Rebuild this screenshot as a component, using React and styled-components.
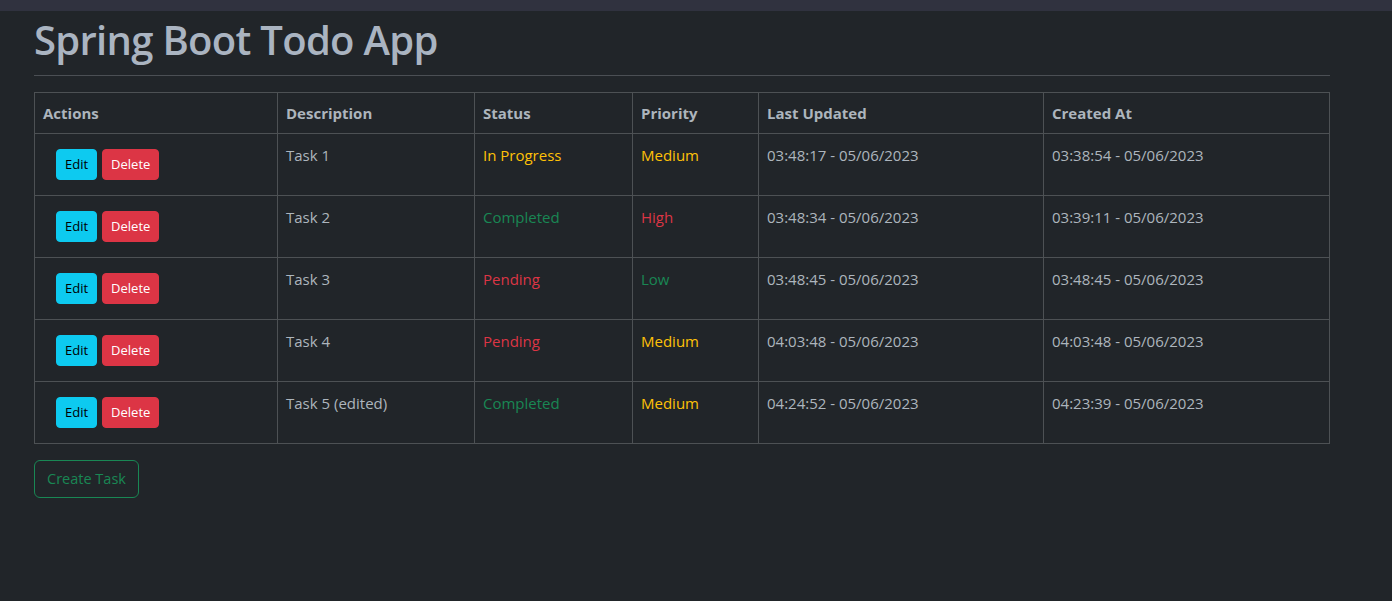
import styled, { createGlobalStyle } from 'styled-components'

const GlobalStyle = createGlobalStyle`
  * { box-sizing: border-box; }
  html, body {
    margin: 0;
    background: #212529;
    color: #adb5bd;
    font-family: "Open Sans", "Noto Sans", sans-serif;
    font-size: 16px;
    line-height: 1.5;
  }
`

const TopBar = styled.div`
  height: 11px;
  background: #30323f;
`

const Page = styled.main`
  width: 1296px;
  margin-left: 34px;
`

const Title = styled.h1`
  font-size: 40px;
  font-weight: 600;
  line-height: 1.2;
  margin: 5px 0 0;
  color: #aab4c1;
  letter-spacing: -0.7px;
`

const Rule = styled.hr`
  border: 0;
  border-top: 1px solid #4b4f54;
  margin: 11px 0 16px;
`

const Table = styled.table`
  width: 100%;
  border-collapse: collapse;
  border: 1px solid #4d5154;
`

const Th = styled.th`
  text-align: left;
  font-weight: 700;
  padding: 8px;
  line-height: 24px;
  border: 1px solid #4d5154;
  width: ${p => p.$w}px;
  font-size: 15px;
`

const Td = styled.td`
  vertical-align: top;
  padding: 9px 8px 8px;
  height: 62px;
  line-height: 24px;
  border: 1px solid #4d5154;
  color: ${p => p.$color || '#adb5bd'};
  font-size: 15px;
`

const Actions = styled.div`
  display: flex;
  gap: 5px;
  margin: 6px 0 0 13px;
`

const SmallButton = styled.button`
  font-family: inherit;
  font-size: 13px;
  line-height: 21px;
  padding: 4px 8px;
  height: 31px;
  border: 1px solid ${p => p.$bg};
  border-radius: 4px;
  background: ${p => p.$bg};
  color: ${p => p.$fg};
  cursor: pointer;
`

const CreateButton = styled.button`
  margin-top: 16px;
  font-family: inherit;
  font-size: 14.5px;
  line-height: 24px;
  padding: 6px 12px;
  border: 1px solid #198754;
  border-radius: 6px;
  background: transparent;
  color: #198754;
  cursor: pointer;
`

const statusColor = {
  'In Progress': '#ffc107',
  Completed: '#198754',
  Pending: '#dc3545'
}

const priorityColor = {
  Medium: '#ffc107',
  High: '#dc3545',
  Low: '#198754'
}

const tasks = [
  { desc: 'Task 1', status: 'In Progress', priority: 'Medium', updated: '03:48:17 - 05/06/2023', created: '03:38:54 - 05/06/2023' },
  { desc: 'Task 2', status: 'Completed', priority: 'High', updated: '03:48:34 - 05/06/2023', created: '03:39:11 - 05/06/2023' },
  { desc: 'Task 3', status: 'Pending', priority: 'Low', updated: '03:48:45 - 05/06/2023', created: '03:48:45 - 05/06/2023' },
  { desc: 'Task 4', status: 'Pending', priority: 'Medium', updated: '04:03:48 - 05/06/2023', created: '04:03:48 - 05/06/2023' },
  { desc: 'Task 5 (edited)', status: 'Completed', priority: 'Medium', updated: '04:24:52 - 05/06/2023', created: '04:23:39 - 05/06/2023' }
]

export default function App () {
  return (
    <>
      <GlobalStyle />
      <TopBar />
      <Page>
        <Title>Spring Boot Todo App</Title>
        <Rule />
        <Table>
          <thead>
            <tr>
              <Th $w={243}>Actions</Th>
              <Th $w={197}>Description</Th>
              <Th $w={158}>Status</Th>
              <Th $w={126}>Priority</Th>
              <Th $w={285}>Last Updated</Th>
              <Th $w={286}>Created At</Th>
            </tr>
          </thead>
          <tbody>
            {tasks.map(task => (
              <tr key={task.desc}>
                <Td>
                  <Actions>
                    <SmallButton $bg='#0dcaf0' $fg='#000'>Edit</SmallButton>
                    <SmallButton $bg='#dc3545' $fg='#fff'>Delete</SmallButton>
                  </Actions>
                </Td>
                <Td>{task.desc}</Td>
                <Td $color={statusColor[task.status]}>{task.status}</Td>
                <Td $color={priorityColor[task.priority]}>{task.priority}</Td>
                <Td>{task.updated}</Td>
                <Td>{task.created}</Td>
              </tr>
            ))}
          </tbody>
        </Table>
        <CreateButton>Create Task</CreateButton>
      </Page>
    </>
  )
}
